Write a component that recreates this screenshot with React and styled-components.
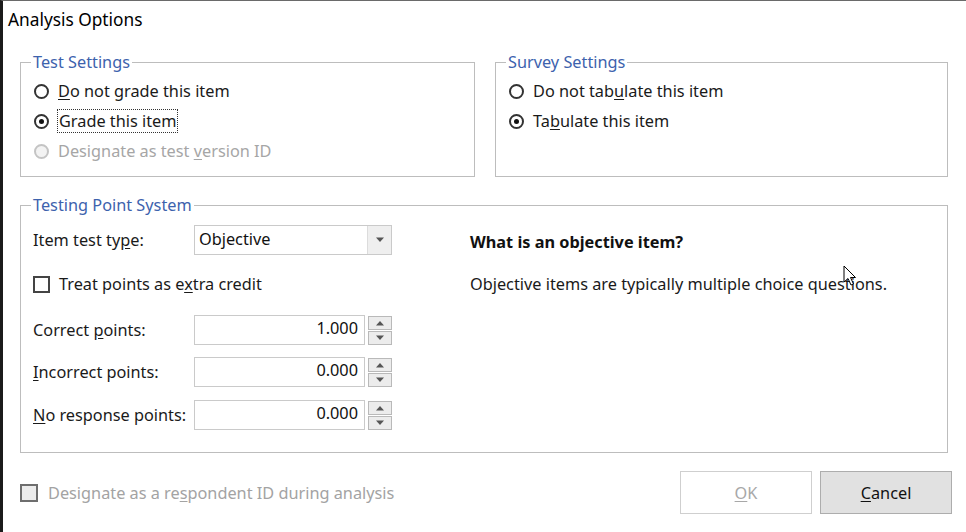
import React from "react";
import styled, { createGlobalStyle } from "styled-components";

const Global = createGlobalStyle`
  html, body { margin: 0; padding: 0; background: #fff; }
  body { font-family: "Noto Sans", "Open Sans", sans-serif; font-size: 16.3px; color: #1a1a1a; }
  * { box-sizing: border-box; }
`;

const Window = styled.div`
  position: relative;
  width: 966px;
  height: 532px;
  background: #fff;
  border-left: 3px solid #1b1b1b;
  border-top: 1px solid #6a6a6a;
  overflow: hidden;
`;

const Title = styled.div`
  height: 51px;
  padding: 8px 0 0 5px;
  font-size: 17.3px;
  line-height: 22px;
  color: #000;
`;

const Body = styled.div`
  padding: 0 18px 0 17px;
`;

const TopRow = styled.div`
  display: grid;
  grid-template-columns: 455px 453px;
  column-gap: 20px;
`;

const Group = styled.fieldset`
  margin: 0;
  border: 1px solid #bdbdbd;
  padding: ${(p) => p.$pad};
  min-width: 0;
  height: ${(p) => p.$h};
  & > legend {
    padding: 0 2px;
    margin-left: -2px;
    line-height: 20px;
    font-size: 16.3px;
    color: #3d62ad;
  }
`;

const RadioRow = styled.label`
  display: flex;
  align-items: center;
  height: 30px;
  gap: 9px;
  padding-left: 1px;
  color: ${(p) => (p.$disabled ? "#a6a6a6" : "#1a1a1a")};
  white-space: nowrap;
`;

const RadioCircle = styled.span`
  width: 15px;
  height: 15px;
  border-radius: 50%;
  border: 2px solid ${(p) => (p.$disabled ? "#c4c4c4" : "#333")};
  background: ${(p) => (p.$disabled ? "#f3f3f3" : "#fff")};
  display: flex;
  align-items: center;
  justify-content: center;
  flex: none;
  &::after {
    content: "";
    width: 5px;
    height: 5px;
    border-radius: 50%;
    background: ${(p) => (p.$checked ? "#111" : "transparent")};
  }
`;

const Focus = styled.span`
  outline: 1px dotted #333;
  outline-offset: 0px;
  padding: 0 1px;
  line-height: 22px;
`;

const Key = styled.u`
  text-decoration: underline;
  text-underline-offset: 2px;
`;

const PointGroup = styled(Group)`
  margin-top: 18px;
`;

const PointInner = styled.div`
  display: grid;
  grid-template-columns: 437px 1fr;
`;

const LeftCol = styled.div`
  display: flex;
  flex-direction: column;
`;

const FieldRow = styled.div`
  display: flex;
  align-items: center;
  height: 30px;
  margin-top: ${(p) => p.$mt || 0}px;
`;

const FieldLabel = styled.span`
  width: 161px;
  flex: none;
  white-space: nowrap;
`;

const Combo = styled.div`
  width: 198px;
  height: 30px;
  border: 1px solid #cacaca;
  display: flex;
  background: #fff;
`;

const ComboText = styled.div`
  flex: 1;
  padding: 2px 0 0 4px;
  line-height: 22px;
  color: #111;
`;

const ComboBtn = styled.div`
  width: 24px;
  border-left: 1px solid #dcdcdc;
  background: #efefef;
  display: flex;
  align-items: center;
  justify-content: center;
`;

const CheckRow = styled.label`
  display: flex;
  align-items: center;
  gap: 9px;
  height: 30px;
  margin-top: 14px;
  white-space: nowrap;
`;

const Box = styled.span`
  width: ${(p) => (p.$disabled ? 18 : 17)}px;
  height: ${(p) => (p.$disabled ? 18 : 17)}px;
  flex: none;
  border: 2px solid ${(p) => (p.$disabled ? "#6e6e6e" : "#444")};
  background: ${(p) => (p.$disabled ? "#ececec" : "#fff")};
`;

const Spin = styled.div`
  display: flex;
  align-items: center;
  gap: 3px;
`;

const NumBox = styled.div`
  width: 171px;
  height: 30px;
  border: 1px solid #cacaca;
  text-align: right;
  padding: 1px 6px 0 0;
  line-height: 22px;
  color: #111;
`;

const SpinBtns = styled.div`
  display: flex;
  flex-direction: column;
  gap: 1px;
  width: 24px;
`;

const SpinBtn = styled.div`
  height: 14px;
  border: 1px solid #b9b9b9;
  background: #ececec;
  display: flex;
  align-items: center;
  justify-content: center;
`;

const Help = styled.div`
  padding-top: 6px;
`;

const HelpTitle = styled.div`
  font-weight: 700;
  line-height: 22px;
  color: #111;
`;

const HelpText = styled.div`
  margin-top: 20px;
  line-height: 22px;
  color: #1a1a1a;
  white-space: nowrap;
`;

const Footer = styled.div`
  display: flex;
  align-items: center;
  justify-content: space-between;
  padding: 0 14px 0 17px;
  margin-top: 18px;
`;

const FootCheck = styled.label`
  display: flex;
  align-items: center;
  gap: 10px;
  color: #a3a3a3;
  white-space: nowrap;
`;

const Buttons = styled.div`
  display: flex;
  gap: 8px;
`;

const Button = styled.button`
  width: 132px;
  height: 43px;
  font-family: inherit;
  font-size: 16.3px;
  border: 1px solid ${(p) => (p.$disabled ? "#cfcfcf" : "#adadad")};
  background: ${(p) => (p.$disabled ? "#fff" : "#e1e1e1")};
  color: ${(p) => (p.$disabled ? "#a8a8a8" : "#111")};
  padding: 0;
`;

const Cursor = styled.svg`
  position: absolute;
  left: 840px;
  top: 264px;
`;

const Tri = ({ up }) => (
  <svg width="10" height="6" viewBox="0 0 10 6">
    <path d={up ? "M1 5.5 L5 1 L9 5.5 Z" : "M1 0.5 L5 5 L9 0.5 Z"} fill="#555" />
  </svg>
);

const NumField = ({ label, value, mt }) => (
  <FieldRow $mt={mt}>
    <FieldLabel>{label}</FieldLabel>
    <Spin>
      <NumBox>{value}</NumBox>
      <SpinBtns>
        <SpinBtn><Tri up /></SpinBtn>
        <SpinBtn><Tri /></SpinBtn>
      </SpinBtns>
    </Spin>
  </FieldRow>
);

export default function App() {
  return (
    <Window>
      <Global />
      <Title>Analysis Options</Title>
      <Body>
        <TopRow>
          <Group $pad="4px 12px 9px 12px" $h="125px">
            <legend>Test Settings</legend>
            <RadioRow>
              <RadioCircle />
              <span><Key>D</Key>o not grade this item</span>
            </RadioRow>
            <RadioRow>
              <RadioCircle $checked />
              <Focus>Grade this item</Focus>
            </RadioRow>
            <RadioRow $disabled>
              <RadioCircle $disabled />
              <span>Designate as test <Key>v</Key>ersion ID</span>
            </RadioRow>
          </Group>
          <Group $pad="4px 12px 9px 12px" $h="125px">
            <legend>Survey Settings</legend>
            <RadioRow>
              <RadioCircle />
              <span>Do not tab<Key>u</Key>late this item</span>
            </RadioRow>
            <RadioRow>
              <RadioCircle $checked />
              <span>Ta<Key>b</Key>ulate this item</span>
            </RadioRow>
          </Group>
        </TopRow>
        <PointGroup $pad="10px 12px 0 12px" $h="258px">
          <legend>Testing Point System</legend>
          <PointInner>
            <LeftCol>
              <FieldRow>
                <FieldLabel>Item test ty<Key>p</Key>e:</FieldLabel>
                <Combo>
                  <ComboText>Objective</ComboText>
                  <ComboBtn><Tri /></ComboBtn>
                </Combo>
              </FieldRow>
              <CheckRow>
                <Box />
                <span>Treat points as e<Key>x</Key>tra credit</span>
              </CheckRow>
              <NumField mt={16} label={<>Correct <Key>p</Key>oints:</>} value="1.000" />
              <NumField mt={12} label={<><Key>I</Key>ncorrect points:</>} value="0.000" />
              <NumField mt={13} label={<><Key>N</Key>o response points:</>} value="0.000" />
            </LeftCol>
            <Help>
              <HelpTitle>What is an objective item?</HelpTitle>
              <HelpText>Objective items are typically multiple choice questions.</HelpText>
            </Help>
          </PointInner>
        </PointGroup>
      </Body>
      <Footer>
        <FootCheck>
          <Box $disabled />
          <span>Designate as a re<Key>s</Key>pondent ID during analysis</span>
        </FootCheck>
        <Buttons>
          <Button $disabled disabled><Key>O</Key>K</Button>
          <Button><Key>C</Key>ancel</Button>
        </Buttons>
      </Footer>
      <Cursor width="14" height="22" viewBox="0 0 14 22">
        <path d="M1 1 L1 17 L5 13.5 L8 20 L10.5 19 L7.5 12.5 L12.5 12.5 Z" fill="#fff" stroke="#000" strokeWidth="1" strokeLinejoin="round" />
      </Cursor>
    </Window>
  );
}
